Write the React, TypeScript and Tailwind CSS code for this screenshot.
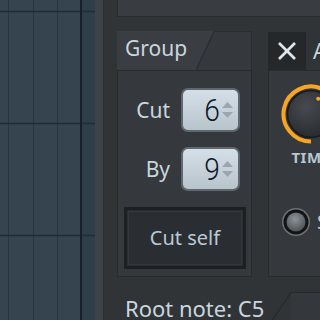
import React from "react";

function Grid() {
  return (
    <svg width="95" height="320" className="block shrink-0">
      <rect x="0" y="0" width="95" height="320" fill="#35444f" />
      <rect x="82" y="0" width="13" height="320" fill="#2f3e49" />
      {[8.5, 33.5, 57.5].map((x) => (
        <line key={x} x1={x} y1="0" x2={x} y2="320" stroke="#27353f" strokeWidth="1" />
      ))}
      {[11.5, 123.5, 235.5].map((y) => (
        <line key={y} x1="0" y1={y} x2="95" y2={y} stroke="#1f2c35" strokeWidth="1.5" />
      ))}
      <line x1="81" y1="0" x2="81" y2="320" stroke="#15212a" strokeWidth="2" />
    </svg>
  );
}

function Arrows() {
  return (
    <svg width="13" height="18" className="block shrink-0">
      <polygon points="1,7 12,7 6.5,1" fill="#9ba6ae" />
      <polygon points="1,11 12,11 6.5,17" fill="#9ba6ae" />
    </svg>
  );
}

function SpinBox({ value }: { value: string }) {
  return (
    <div className="w-[59px] h-[44px] rounded-[7px] border-2 border-[#5f686e] bg-gradient-to-b from-[#d5dfe7] to-[#b8c4cc] flex items-center justify-end pr-[4px] gap-[1px]">
      <span className="font-['Roboto',sans-serif] font-light text-[32px] leading-none text-[#0d1829] scale-x-[0.88] origin-right inline-block">
        {value}
      </span>
      <Arrows />
    </div>
  );
}

function Knob() {
  return (
    <svg width="60" height="60" className="block">
      <defs>
        <radialGradient id="kg" cx="40%" cy="35%" r="70%">
          <stop offset="0%" stopColor="#474b50" />
          <stop offset="100%" stopColor="#26292c" />
        </radialGradient>
      </defs>
      <path d="M 30 57.5 A 27.5 27.5 0 1 1 41.62 5.08" fill="none" stroke="#f6a623" strokeWidth="4" />
      <circle cx="30" cy="30" r="23.5" fill="url(#kg)" stroke="#17191b" strokeWidth="1.5" />
      <circle cx="37.2" cy="14.8" r="2" fill="#f6a623" />
    </svg>
  );
}

function Radio() {
  return (
    <svg width="30" height="30" className="block shrink-0">
      <defs>
        <radialGradient id="rg" cx="45%" cy="35%" r="70%">
          <stop offset="0%" stopColor="#8d9398" />
          <stop offset="100%" stopColor="#4a4f53" />
        </radialGradient>
      </defs>
      <circle cx="15" cy="15" r="14" fill="#6b7175" />
      <circle cx="15" cy="15" r="12.5" fill="#121416" />
      <circle cx="15" cy="15" r="9.5" fill="url(#rg)" />
    </svg>
  );
}

export default function App() {
  return (
    <div className="w-[320px] h-[320px] overflow-hidden flex bg-[#303437] font-['Noto_Sans',sans-serif]">
      <Grid />
      <div className="w-[9px] shrink-0 bg-[#3e4347] border-r border-[#2a2e31]" />
      <div className="flex-1 min-w-0 flex flex-col pl-[13px]">
        {/* top box */}
        <div className="h-[17px] w-[260px] shrink-0 bg-[#393d41] border-l border-b border-[#272a2d]" />

        {/* panels row */}
        <div className="flex gap-[16px] mt-[14px] shrink-0">
          {/* Group panel */}
          <div className="w-[135px] h-[246px] shrink-0 flex flex-col">
            <div className="h-[39px] flex shrink-0">
              <div className="w-[79px] bg-[#3a3e42] pl-[8px] pt-[3px]">
                <span className="text-[21px] leading-[28px] text-[#c9d6df]">Group</span>
              </div>
              <svg width="18" height="39" className="block shrink-0">
                <rect x="0" y="0" width="18" height="39" fill="#35393d" />
                <polygon points="0,0 18,0 0,39" fill="#3a3e42" />
                <line x1="18" y1="0.5" x2="0" y2="39" stroke="#2a2d30" strokeWidth="1.2" />
              </svg>
              <div className="flex-1 bg-[#35393d] border-t border-r border-[#2a2d30]" />
            </div>
            <div className="flex-1 bg-[#35393d] border border-[#282b2e] flex flex-col">
              <div className="flex items-center mt-[17px]">
                <span className="w-[52px] text-right text-[21px] leading-[28px] text-[#c9d6df]">Cut</span>
                <div className="ml-[11px]">
                  <SpinBox value="6" />
                </div>
              </div>
              <div className="flex items-center mt-[15px]">
                <span className="w-[52px] text-right text-[21px] leading-[28px] text-[#c9d6df]">By</span>
                <div className="ml-[11px]">
                  <SpinBox value="9" />
                </div>
              </div>
              <div className="ml-[6px] mt-[16px] w-[122px] h-[62px] border-[3px] border-[#1d2023] bg-[#2a2e32] p-[1px]">
                <div className="w-full h-full border border-[#33373b] flex items-center justify-center">
                  <span className="text-[20px] leading-[28px] text-[#b9c9d5]">Cut self</span>
                </div>
              </div>
            </div>
          </div>

          {/* Right panel */}
          <div className="w-[130px] h-[246px] shrink-0 flex flex-col">
            <div className="h-[39px] flex shrink-0">
              <div className="w-[38px] mt-[1px] bg-[#25282b] flex items-center justify-center">
                <svg width="20" height="20" className="block">
                  <line x1="2" y1="2" x2="18" y2="18" stroke="#dde6ec" strokeWidth="2.6" />
                  <line x1="18" y1="2" x2="2" y2="18" stroke="#dde6ec" strokeWidth="2.6" />
                </svg>
              </div>
              <span className="ml-[7px] mt-[6px] text-[21px] leading-[28px] text-[#c9d6df]">ARP</span>
            </div>
            <div className="flex-1 bg-[#35393d] border border-[#282b2e] flex flex-col pl-[12px] pt-[13px]">
              <div className="w-[60px] flex flex-col items-center">
                <Knob />
                <span className="mt-[6px] text-[15px] leading-[15px] font-bold tracking-[0.5px] text-[#b6c6d2]">TIME</span>
              </div>
              <div className="flex items-center mt-[42px] gap-[6px]">
                <Radio />
                <span className="text-[20px] leading-[28px] text-[#b9c9d5]">Stretch</span>
              </div>
            </div>
          </div>
        </div>

        {/* Root note row */}
        <div className="flex mt-[15px] h-[40px] shrink-0">
          <div className="w-[155px] shrink-0 pl-[8px] pt-[2px]">
            <span className="text-[22px] leading-[28px] text-[#c9d6df] whitespace-nowrap">Root note: C5</span>
          </div>
          <svg width="19" height="40" className="block shrink-0">
            <line x1="19" y1="0.5" x2="0" y2="28.5" stroke="#26292c" strokeWidth="1.2" />
          </svg>
          <div className="w-[100px] shrink-0 border-t border-[#26292c] bg-[#34383c]" />
        </div>
      </div>
    </div>
  );
}
